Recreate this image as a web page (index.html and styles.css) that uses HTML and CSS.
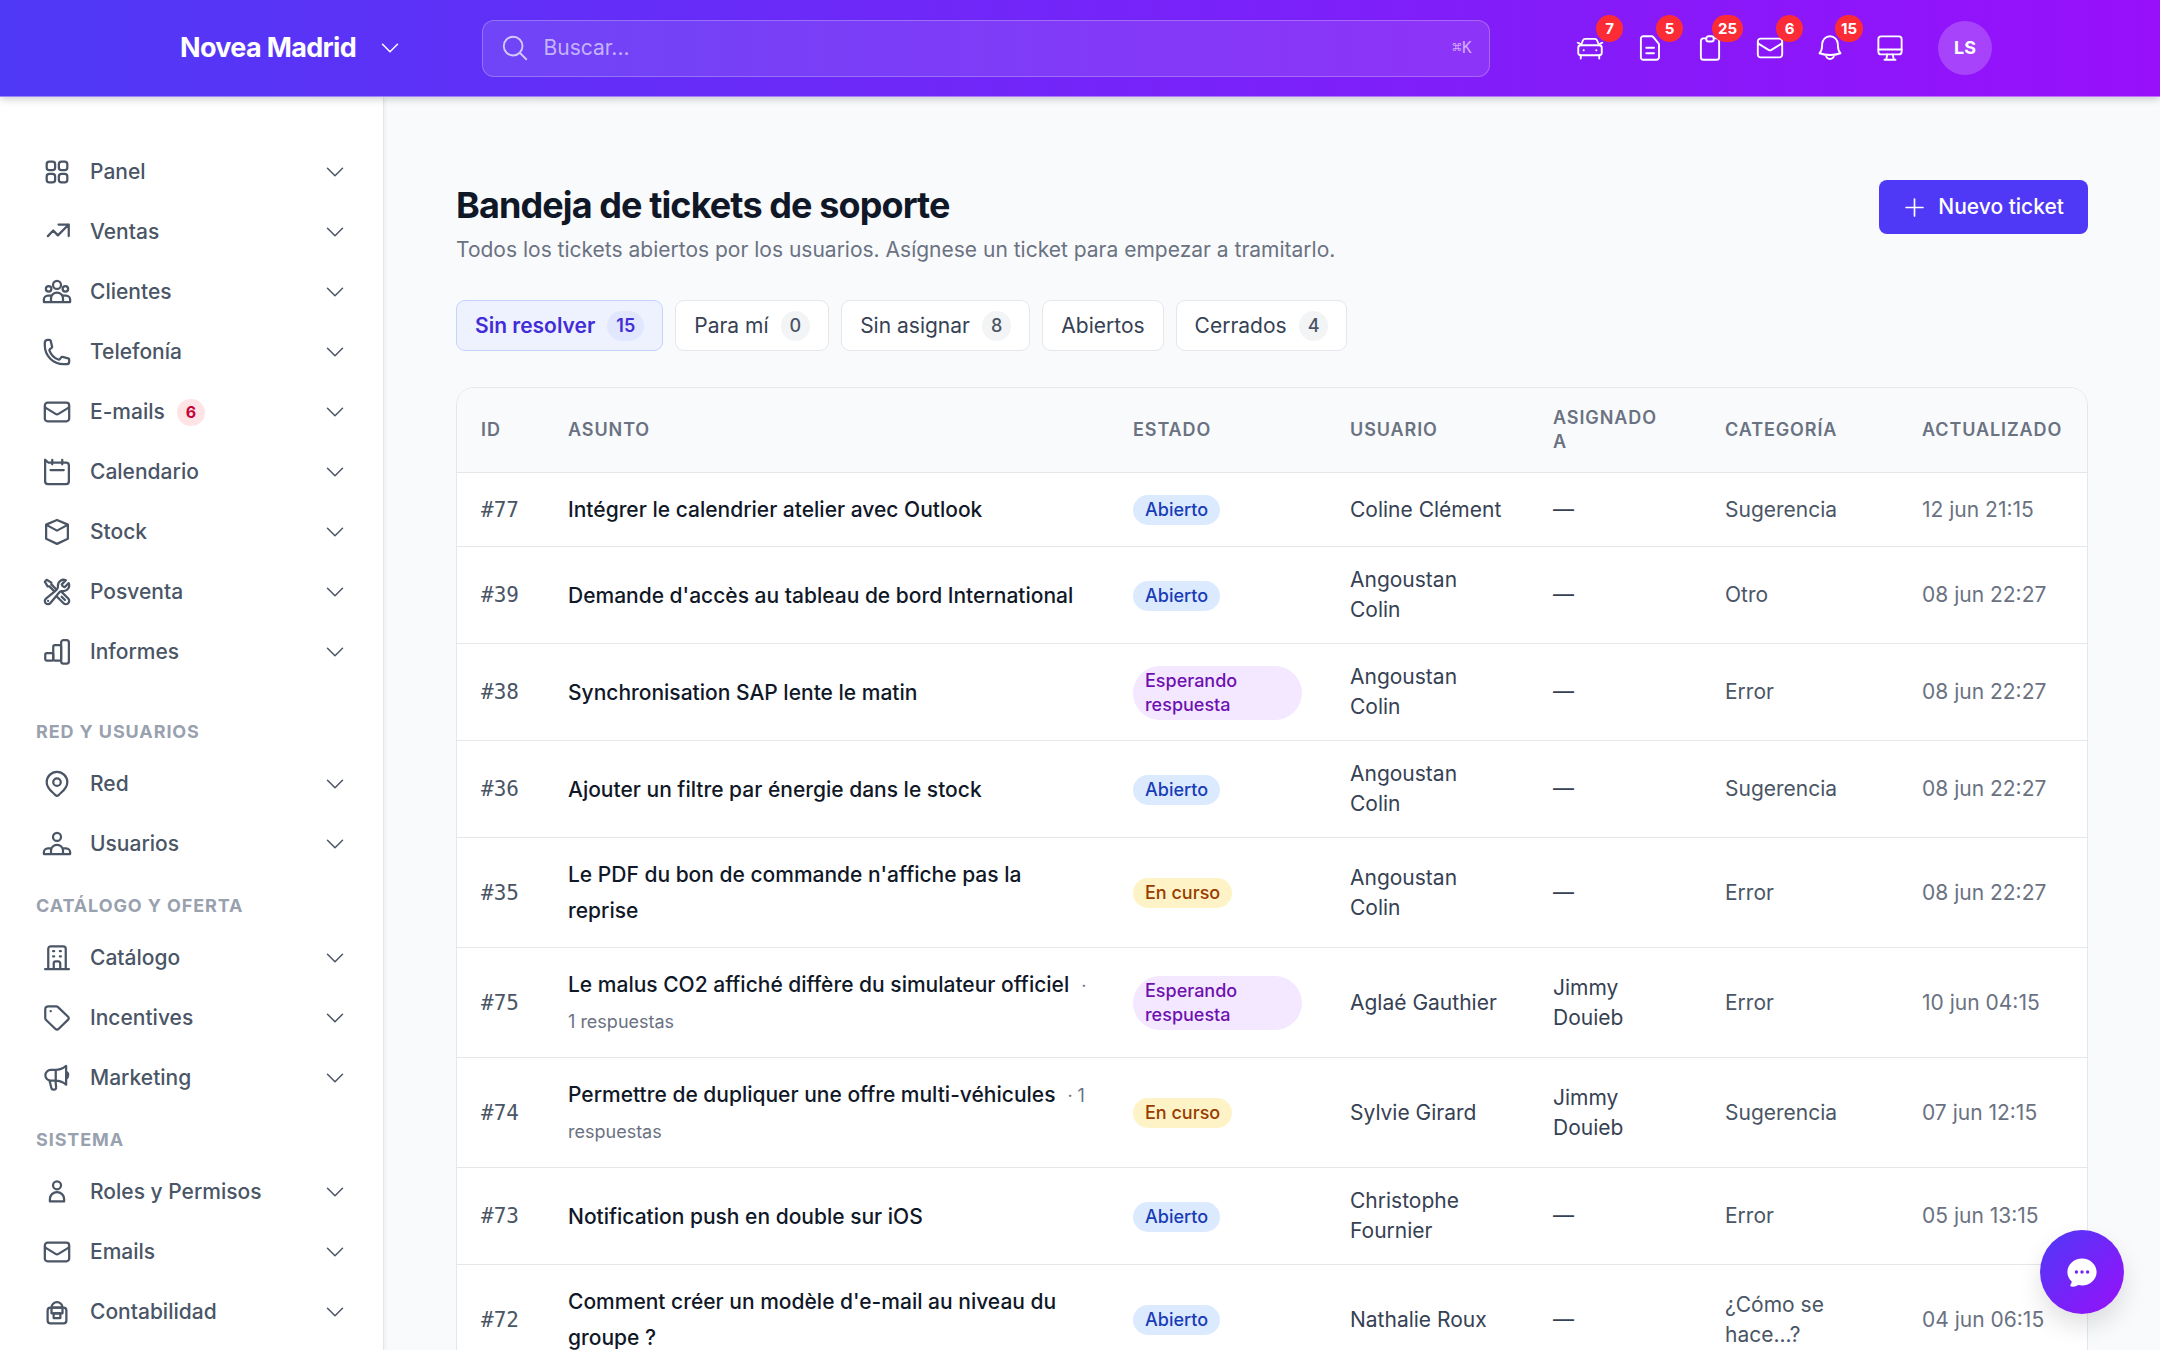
FILE: index.html
```html
<!DOCTYPE html>
<html lang="es">
<head>
    <meta charset="UTF-8">
    <meta name="viewport" content="width=device-width, initial-scale=1.0">
    <title>Bandeja de tickets de soporte</title>
    <link rel="stylesheet" href="styles.css">
</head>
<body>
    <svg class="sprite" aria-hidden="true">
        <symbol id="i-chevron" viewBox="0 0 24 24"><path d="m19.5 8.25-7.5 7.5-7.5-7.5"/></symbol>
        <symbol id="i-search" viewBox="0 0 24 24"><path d="m21 21-5.197-5.197m0 0A7.5 7.5 0 1 0 5.196 5.196a7.5 7.5 0 0 0 10.607 10.607Z"/></symbol>
        <symbol id="i-plus" viewBox="0 0 24 24"><path d="M12 4.5v15m7.5-7.5h-15"/></symbol>
        <symbol id="i-car" viewBox="0 0 24 24">
            <path d="M4.8 9.8 6.3 6A2 2 0 0 1 8.2 4.7h7.6A2 2 0 0 1 17.7 6l1.5 3.8M2.2 7.8l1.6.7M21.8 7.8l-1.6.7M4.6 17.8v2.6M19.4 17.8v2.6M6.9 13.8h.1M17 13.8h.1"/>
            <rect x="2.6" y="9.8" width="18.8" height="8" rx="2"/>
        </symbol>
        <symbol id="i-document" viewBox="0 0 24 24"><path d="M6.6 2.6h6.6a2 2 0 0 1 1.5.7l3.9 4.8a2 2 0 0 1 .6 1.4v9.8a2.1 2.1 0 0 1-2.1 2.1H6.6a1.9 1.9 0 0 1-1.9-1.9v-15a1.9 1.9 0 0 1 1.9-1.9ZM9 11.8h6.2M9 16.2h6.2"/></symbol>
        <symbol id="i-clipboard" viewBox="0 0 24 24">
            <path d="M9 4.3H6.8a2.1 2.1 0 0 0-2.1 2.1v12.9a2.1 2.1 0 0 0 2.1 2.1h10.4a2.1 2.1 0 0 0 2.1-2.1V6.4a2.1 2.1 0 0 0-2.1-2.1H15"/>
            <rect x="9" y="2.6" width="6" height="4.2" rx="1.9"/>
        </symbol>
        <symbol id="i-mail" viewBox="0 0 24 24"><path d="M21.75 6.75v10.5a2.25 2.25 0 0 1-2.25 2.25h-15a2.25 2.25 0 0 1-2.25-2.25V6.75m19.5 0A2.25 2.25 0 0 0 19.5 4.5h-15a2.25 2.25 0 0 0-2.25 2.25m19.5 0v.243a2.25 2.25 0 0 1-1.07 1.916l-7.5 4.615a2.25 2.25 0 0 1-2.36 0L3.32 8.91a2.25 2.25 0 0 1-1.07-1.916V6.75"/></symbol>
        <symbol id="i-bell" viewBox="0 0 24 24"><path d="M20.4 16.2c-1.6-1.7-2.1-3.6-2.1-6.2V8.9a6.3 6.3 0 0 0-12.6 0V10c0 2.6-.5 4.5-2.1 6.2 5.5 1.9 11.3 1.9 16.8 0ZM8.8 17.6a3.2 3.2 0 0 0 6.4 0"/></symbol>
        <symbol id="i-monitor" viewBox="0 0 24 24">
            <rect x="2.7" y="2.7" width="18.6" height="14.4" rx="2.2"/>
            <path d="M2.7 13.2h18.6M9.8 17.1l-.8 4.2M14.2 17.1l.8 4.2M7.6 21.4h8.8"/>
        </symbol>
        <symbol id="i-panel" viewBox="0 0 24 24">
            <rect x="3.75" y="3.75" width="6.75" height="6.75" rx="2.1"/>
            <rect x="13.5" y="3.75" width="6.75" height="6.75" rx="2.1"/>
            <rect x="3.75" y="13.5" width="6.75" height="6.75" rx="2.1"/>
            <rect x="13.5" y="13.5" width="6.75" height="6.75" rx="2.1"/>
        </symbol>
        <symbol id="i-trend" viewBox="0 0 24 24"><path d="M4.7 15.3 9 10.8l3.7 3.9L21.4 6M13.2 6h8.2v9.2"/></symbol>
        <symbol id="i-clients" viewBox="0 0 24 24">
            <circle cx="12" cy="6.3" r="3.2"/>
            <circle cx="5.3" cy="9.4" r="2.2"/>
            <circle cx="18.7" cy="9.4" r="2.2"/>
            <path d="M7.2 20v-2.8a4.8 4.8 0 0 1 9.6 0V20M7.2 14.8H4.7A3.2 3.2 0 0 0 1.5 18v2h21v-2a3.2 3.2 0 0 0-3.2-3.2h-2.5"/>
        </symbol>
        <symbol id="i-phone" viewBox="0 0 24 24"><path d="M2.25 6.75c0 8.284 6.716 15 15 15h2.25a2.25 2.25 0 0 0 2.25-2.25v-1.372c0-.516-.351-.966-.852-1.091l-4.423-1.106c-.44-.11-.902.055-1.173.417l-.97 1.293c-.282.376-.769.542-1.21.38a12.035 12.035 0 0 1-7.143-7.143c-.162-.441.004-.928.38-1.21l1.293-.97c.363-.271.527-.734.417-1.173L6.963 3.102a1.125 1.125 0 0 0-1.091-.852H4.5A2.25 2.25 0 0 0 2.25 4.5v2.25Z"/></symbol>
        <symbol id="i-calendar" viewBox="0 0 24 24"><path d="M2.5 2.2v17.2a2.2 2.2 0 0 0 2.2 2.2h14.6a2.2 2.2 0 0 0 2.2-2.2V6.6a2.2 2.2 0 0 0-2.2-2.2H5ZM8.2 2.2v3.6M16.2 2.2v3.6M6.8 10.4h10.6"/></symbol>
        <symbol id="i-cube" viewBox="0 0 24 24"><path d="m12 2.4 8.7 3.7v11.3L12 21.5l-8.7-4.1V6.1ZM3.5 6.3 12 10.9l8.5-4.6"/></symbol>
        <symbol id="i-tools" viewBox="0 0 24 24"><path d="M11.42 15.17 17.25 21A2.652 2.652 0 0 0 21 17.25l-5.877-5.877M11.42 15.17l2.496-3.03c.317-.384.74-.626 1.208-.766M11.42 15.17l-4.655 5.653a2.548 2.548 0 1 1-3.586-3.586l6.837-5.63m5.108-.233c.55-.164 1.163-.188 1.743-.14a4.5 4.5 0 0 0 4.486-6.336l-3.276 3.277a3.004 3.004 0 0 1-2.25-2.25l3.276-3.276a4.5 4.5 0 0 0-6.336 4.486c.091 1.076-.071 2.264-.904 2.95l-.102.085m-1.745 1.437L5.909 7.5H4.5L2.25 3.75l1.5-1.5L7.5 4.5v1.409l4.26 4.26m-1.745 1.437 1.745-1.437m6.615 8.206L15.75 15.75M4.867 19.125h.008v.008h-.008v-.008Z"/></symbol>
        <symbol id="i-bars" viewBox="0 0 24 24">
            <rect x="2.6" y="12.8" width="6.4" height="6.1" rx="1.3"/>
            <rect x="9" y="6.4" width="6.3" height="12.5" rx="1.3"/>
            <rect x="15.3" y="2.5" width="6.2" height="18.7" rx="1.9"/>
        </symbol>
        <symbol id="i-pin" viewBox="0 0 24 24">
            <path d="M20.25 10.5c0 5-4 7.3-7 10.4a1.8 1.8 0 0 1-2.5 0c-3-3.1-7-5.4-7-10.4a8.25 8.25 0 0 1 16.5 0Z"/>
            <circle cx="12" cy="10.5" r="3"/>
        </symbol>
        <symbol id="i-users" viewBox="0 0 24 24">
            <circle cx="12" cy="6.3" r="3.2"/>
            <path d="M7.2 20v-2.6a4.8 4.8 0 0 1 9.6 0V20M7.2 15.4H4.7a3.2 3.2 0 0 0-3.2 3.2V20h21v-1.4a3.2 3.2 0 0 0-3.2-3.2h-2.5"/>
        </symbol>
        <symbol id="i-building" viewBox="0 0 24 24"><path d="M2.5 20.9h19M5 20.9V4.6a2 2 0 0 1 2-2h10a2 2 0 0 1 2 2v16.3M8.9 6.5h.8M14.3 6.5h.8M8.9 10.7h.8M14.3 10.7h.8M9.4 20.9v-4.7a1.5 1.5 0 0 1 1.5-1.5h2.2a1.5 1.5 0 0 1 1.5 1.5v4.7"/></symbol>
        <symbol id="i-tag" viewBox="0 0 24 24"><path d="M5 2.6h6.2c.6 0 1.2.2 1.6.7l8.1 7.7a1.6 1.6 0 0 1 0 2.3l-7.5 7.3a2 2 0 0 1-2.8 0L3.3 13.6a2.3 2.3 0 0 1-.7-1.6V5A2.4 2.4 0 0 1 5 2.6ZM6.9 6.5h.1"/></symbol>
        <symbol id="i-megaphone" viewBox="0 0 24 24"><path d="M19.3 2.3v15c-2.6-2.2-5.2-3.2-8.8-3.2H7a4.3 4.3 0 0 1 0-8.6h3.5c3.6 0 6.2-1 8.8-3.2ZM11 5.5v8.6M19.3 6.8a3.6 3.6 0 0 1 0 6M6 14l1.5 6a1.6 1.6 0 0 0 1.6 1.3h.6a1.6 1.6 0 0 0 1.6-1.8L10.8 14"/></symbol>
        <symbol id="i-user" viewBox="0 0 24 24">
            <circle cx="12" cy="6.6" r="3.2"/>
            <path d="M6.3 19.5v-1.8a5.7 5.7 0 0 1 11.4 0v1.8Z"/>
        </symbol>
        <symbol id="i-lock" viewBox="0 0 24 24">
            <rect x="4.5" y="8.5" width="15" height="12.5" rx="2.2"/>
            <rect x="9.3" y="13" width="5.4" height="3.8"/>
            <path d="M7.6 13V8.5a4.4 4.4 0 0 1 8.8 0V13ZM7.6 8.5h8.8"/>
        </symbol>
        <symbol id="i-chat" viewBox="0 0 24 24"><path fill-rule="evenodd" d="M4.804 21.644A6.707 6.707 0 0 0 6 21.75a6.721 6.721 0 0 0 3.583-1.029c.774.182 1.584.279 2.417.279 5.322 0 9.75-3.97 9.75-9 0-5.03-4.428-9-9.75-9s-9.75 3.97-9.75 9c0 2.409 1.025 4.587 2.674 6.192.232.226.277.428.254.543a3.73 3.73 0 0 1-.814 1.686.75.75 0 0 0 .44 1.223ZM8.25 10.875a1.125 1.125 0 1 0 0 2.25 1.125 1.125 0 0 0 0-2.25ZM10.875 12a1.125 1.125 0 1 1 2.25 0 1.125 1.125 0 0 1-2.25 0Zm4.875-1.125a1.125 1.125 0 1 0 0 2.25 1.125 1.125 0 0 0 0-2.25Z"/></symbol>
    </svg>

    <header class="topbar">
        <div class="topbar-inner">
            <button class="brand" type="button">
                Novea Madrid
                <svg class="icon-sm"><use href="#i-chevron"/></svg>
            </button>
            <div class="search-wrap">
                <label class="search">
                    <svg class="icon"><use href="#i-search"/></svg>
                    <input type="search" placeholder="Buscar..." aria-label="Buscar">
                    <kbd>⌘K</kbd>
                </label>
            </div>
            <div class="actions">
                <button type="button" aria-label="Vehículos"><svg class="icon"><use href="#i-car"/></svg><span class="count">7</span></button>
                <button type="button" aria-label="Documentos"><svg class="icon"><use href="#i-document"/></svg><span class="count">5</span></button>
                <button type="button" aria-label="Tareas"><svg class="icon"><use href="#i-clipboard"/></svg><span class="count">25</span></button>
                <button type="button" aria-label="E-mails"><svg class="icon"><use href="#i-mail"/></svg><span class="count">6</span></button>
                <button type="button" aria-label="Notificaciones"><svg class="icon"><use href="#i-bell"/></svg><span class="count">15</span></button>
                <button type="button" aria-label="Pantalla"><svg class="icon"><use href="#i-monitor"/></svg></button>
            </div>
            <button class="avatar" type="button">LS</button>
        </div>
    </header>

    <div class="layout">
        <nav class="sidebar">
            <button class="nav-item" type="button"><svg class="icon"><use href="#i-panel"/></svg>Panel<svg class="icon-sm"><use href="#i-chevron"/></svg></button>
            <button class="nav-item" type="button"><svg class="icon"><use href="#i-trend"/></svg>Ventas<svg class="icon-sm"><use href="#i-chevron"/></svg></button>
            <button class="nav-item" type="button"><svg class="icon"><use href="#i-clients"/></svg>Clientes<svg class="icon-sm"><use href="#i-chevron"/></svg></button>
            <button class="nav-item" type="button"><svg class="icon"><use href="#i-phone"/></svg>Telefonía<svg class="icon-sm"><use href="#i-chevron"/></svg></button>
            <button class="nav-item" type="button"><svg class="icon"><use href="#i-mail"/></svg>E-mails<span class="nav-count">6</span><svg class="icon-sm"><use href="#i-chevron"/></svg></button>
            <button class="nav-item" type="button"><svg class="icon"><use href="#i-calendar"/></svg>Calendario<svg class="icon-sm"><use href="#i-chevron"/></svg></button>
            <button class="nav-item" type="button"><svg class="icon"><use href="#i-cube"/></svg>Stock<svg class="icon-sm"><use href="#i-chevron"/></svg></button>
            <button class="nav-item" type="button"><svg class="icon"><use href="#i-tools"/></svg>Posventa<svg class="icon-sm"><use href="#i-chevron"/></svg></button>
            <button class="nav-item" type="button"><svg class="icon"><use href="#i-bars"/></svg>Informes<svg class="icon-sm"><use href="#i-chevron"/></svg></button>

            <h2 class="nav-title nav-title-first">Red y usuarios</h2>
            <button class="nav-item" type="button"><svg class="icon"><use href="#i-pin"/></svg>Red<svg class="icon-sm"><use href="#i-chevron"/></svg></button>
            <button class="nav-item" type="button"><svg class="icon"><use href="#i-users"/></svg>Usuarios<svg class="icon-sm"><use href="#i-chevron"/></svg></button>

            <h2 class="nav-title">Catálogo y oferta</h2>
            <button class="nav-item" type="button"><svg class="icon"><use href="#i-building"/></svg>Catálogo<svg class="icon-sm"><use href="#i-chevron"/></svg></button>
            <button class="nav-item" type="button"><svg class="icon"><use href="#i-tag"/></svg>Incentives<svg class="icon-sm"><use href="#i-chevron"/></svg></button>
            <button class="nav-item" type="button"><svg class="icon"><use href="#i-megaphone"/></svg>Marketing<svg class="icon-sm"><use href="#i-chevron"/></svg></button>

            <h2 class="nav-title">Sistema</h2>
            <button class="nav-item" type="button"><svg class="icon"><use href="#i-user"/></svg>Roles y Permisos<svg class="icon-sm"><use href="#i-chevron"/></svg></button>
            <button class="nav-item" type="button"><svg class="icon"><use href="#i-mail"/></svg>Emails<svg class="icon-sm"><use href="#i-chevron"/></svg></button>
            <button class="nav-item" type="button"><svg class="icon"><use href="#i-lock"/></svg>Contabilidad<svg class="icon-sm"><use href="#i-chevron"/></svg></button>
        </nav>

        <main class="content">
            <div class="page-head">
                <div>
                    <h1>Bandeja de tickets de soporte</h1>
                    <p>Todos los tickets abiertos por los usuarios. Asígnese un ticket para empezar a tramitarlo.</p>
                </div>
                <button class="btn-primary" type="button"><svg class="icon-sm"><use href="#i-plus"/></svg>Nuevo ticket</button>
            </div>

            <div class="tabs">
                <button class="tab active" type="button">Sin resolver <span>15</span></button>
                <button class="tab" type="button">Para mí <span>0</span></button>
                <button class="tab" type="button">Sin asignar <span>8</span></button>
                <button class="tab" type="button">Abiertos</button>
                <button class="tab" type="button">Cerrados <span>4</span></button>
            </div>

            <div class="card">
                <table class="tickets">
                    <colgroup>
                        <col class="col-id">
                        <col>
                        <col class="col-status">
                        <col class="col-user">
                        <col class="col-assigned">
                        <col class="col-category">
                        <col class="col-updated">
                    </colgroup>
                    <thead>
                        <tr>
                            <th>ID</th>
                            <th>Asunto</th>
                            <th>Estado</th>
                            <th>Usuario</th>
                            <th>Asignado a</th>
                            <th>Categoría</th>
                            <th class="date">Actualizado</th>
                        </tr>
                    </thead>
                    <tbody>
                        <tr>
                            <td class="id">#77</td>
                            <td class="subject"><a href="#">Intégrer le calendrier atelier avec Outlook</a></td>
                            <td><span class="badge open">Abierto</span></td>
                            <td>Coline Clément</td>
                            <td>—</td>
                            <td class="category">Sugerencia</td>
                            <td class="date">12 jun 21:15</td>
                        </tr>
                        <tr>
                            <td class="id">#39</td>
                            <td class="subject"><a href="#">Demande d'accès au tableau de bord International</a></td>
                            <td><span class="badge open">Abierto</span></td>
                            <td>Angoustan Colin</td>
                            <td>—</td>
                            <td class="category">Otro</td>
                            <td class="date">08 jun 22:27</td>
                        </tr>
                        <tr>
                            <td class="id">#38</td>
                            <td class="subject"><a href="#">Synchronisation SAP lente le matin</a></td>
                            <td><span class="badge waiting">Esperando respuesta</span></td>
                            <td>Angoustan Colin</td>
                            <td>—</td>
                            <td class="category">Error</td>
                            <td class="date">08 jun 22:27</td>
                        </tr>
                        <tr>
                            <td class="id">#36</td>
                            <td class="subject"><a href="#">Ajouter un filtre par énergie dans le stock</a></td>
                            <td><span class="badge open">Abierto</span></td>
                            <td>Angoustan Colin</td>
                            <td>—</td>
                            <td class="category">Sugerencia</td>
                            <td class="date">08 jun 22:27</td>
                        </tr>
                        <tr>
                            <td class="id">#35</td>
                            <td class="subject"><a href="#">Le PDF du bon de commande n'affiche pas la reprise</a></td>
                            <td><span class="badge progress">En curso</span></td>
                            <td>Angoustan Colin</td>
                            <td>—</td>
                            <td class="category">Error</td>
                            <td class="date">08 jun 22:27</td>
                        </tr>
                        <tr>
                            <td class="id">#75</td>
                            <td class="subject"><a href="#">Le malus CO2 affiché diffère du simulateur officiel</a> <span class="replies">· 1 respuestas</span></td>
                            <td><span class="badge waiting">Esperando respuesta</span></td>
                            <td>Aglaé Gauthier</td>
                            <td>Jimmy Douieb</td>
                            <td class="category">Error</td>
                            <td class="date">10 jun 04:15</td>
                        </tr>
                        <tr>
                            <td class="id">#74</td>
                            <td class="subject"><a href="#">Permettre de dupliquer une offre multi-véhicules</a> <span class="replies">· 1 respuestas</span></td>
                            <td><span class="badge progress">En curso</span></td>
                            <td>Sylvie Girard</td>
                            <td>Jimmy Douieb</td>
                            <td class="category">Sugerencia</td>
                            <td class="date">07 jun 12:15</td>
                        </tr>
                        <tr>
                            <td class="id">#73</td>
                            <td class="subject"><a href="#">Notification push en double sur iOS</a></td>
                            <td><span class="badge open">Abierto</span></td>
                            <td>Christophe Fournier</td>
                            <td>—</td>
                            <td class="category">Error</td>
                            <td class="date">05 jun 13:15</td>
                        </tr>
                        <tr>
                            <td class="id">#72</td>
                            <td class="subject"><a href="#">Comment créer un modèle d'e-mail au niveau du groupe ?</a></td>
                            <td><span class="badge open">Abierto</span></td>
                            <td>Nathalie Roux</td>
                            <td>—</td>
                            <td class="category">¿Cómo se hace...?</td>
                            <td class="date">04 jun 06:15</td>
                        </tr>
                    </tbody>
                </table>
            </div>
        </main>
    </div>

    <button class="chat" type="button" aria-label="Abrir chat"><svg><use href="#i-chat"/></svg></button>
</body>
</html>
```
FILE: styles.css
```css
* {
    box-sizing: border-box;
}
body {
    margin: 0;
    height: 100vh;
    display: flex;
    flex-direction: column;
    overflow: hidden;
    font-family: Inter, "Liberation Sans", sans-serif;
    font-size: 21px;
    line-height: 30px;
    color: #364153;
    background: #f9fafc;
}
button, input {
    font: inherit;
    color: inherit;
}
button {
    border: none;
    background: none;
    padding: 0;
    cursor: pointer;
}
h1, h2, p {
    margin: 0;
}
.sprite {
    position: absolute;
    width: 0;
    height: 0;
}
.icon, .icon-sm {
    flex: none;
    fill: none;
    stroke: currentColor;
    stroke-width: 1.5;
    stroke-linecap: round;
    stroke-linejoin: round;
}
.icon {
    width: 30px;
    height: 30px;
}
.icon-sm {
    width: 24px;
    height: 24px;
}

/* top bar */
.topbar {
    flex: none;
    position: relative;
    z-index: 2;
    padding: 0 168px;
    color: white;
    background: linear-gradient(90deg, #4f39f6, #9810fa);
    border-bottom: 1px solid rgba(255, 255, 255, 0.4);
    box-shadow: 0 2px 8px rgba(0, 0, 0, 0.2);
}
.topbar-inner {
    display: flex;
    align-items: center;
    height: 96px;
}
.brand {
    display: flex;
    align-items: center;
    gap: 22px;
    padding-left: 12px;
    font-size: 27px;
    font-weight: 700;
    letter-spacing: -0.025em;
}
.search-wrap {
    flex: 1;
    display: flex;
    justify-content: center;
    padding: 0 24px;
}
.search {
    flex: 1;
    max-width: 1008px;
    height: 57px;
    display: flex;
    align-items: center;
    gap: 14px;
    padding: 0 17px;
    color: rgba(255, 255, 255, 0.7);
    background: rgba(255, 255, 255, 0.1);
    border: 1px solid rgba(255, 255, 255, 0.25);
    border-radius: 12px;
}
.search input {
    flex: 1;
    min-width: 0;
    padding: 0;
    border: none;
    outline: none;
    background: none;
}
.search input::placeholder {
    color: rgba(255, 255, 255, 0.6);
}
.search kbd {
    font-family: "DejaVu Sans Mono", monospace;
    font-size: 16px;
    color: rgba(255, 255, 255, 0.6);
}
.actions {
    display: flex;
    gap: 18px;
}
.actions button {
    position: relative;
    width: 42px;
    height: 42px;
    display: flex;
    align-items: center;
    justify-content: center;
}
.count {
    position: absolute;
    top: -12px;
    right: -12px;
    min-width: 27px;
    height: 27px;
    padding: 0 6px;
    border-radius: 14px;
    background: #fb2c36;
    font-size: 15px;
    font-weight: 700;
    line-height: 27px;
}
.avatar {
    width: 54px;
    height: 54px;
    margin-left: 27px;
    border-radius: 50%;
    background: rgba(255, 255, 255, 0.2);
    font-size: 18px;
    font-weight: 700;
}

/* sidebar */
.layout {
    flex: 1;
    min-height: 0;
    display: flex;
}
.sidebar {
    flex: none;
    width: 384px;
    padding: 45px 36px 0;
    overflow: hidden;
    background: white;
    border-right: 1px solid #e5e7eb;
    box-shadow: 1px 0 4px rgba(0, 0, 0, 0.06);
}
.nav-item {
    width: 100%;
    height: 60px;
    display: flex;
    align-items: center;
    gap: 18px;
    padding: 0 0 0 6px;
    font-weight: 500;
    color: #4a5565;
}
.nav-item .icon {
    stroke-width: 1.8;
}
.nav-item .icon-sm {
    margin-left: auto;
}
.nav-count {
    min-width: 28px;
    height: 27px;
    margin-left: -6px;
    border-radius: 14px;
    background: #ffe4e6;
    color: #c70036;
    font-size: 16px;
    font-weight: 700;
    line-height: 27px;
}
.nav-title {
    padding: 20px 0 10px;
    font-size: 18px;
    line-height: 24px;
    font-weight: 700;
    letter-spacing: 0.05em;
    text-transform: uppercase;
    color: #99a1af;
}
.nav-title-first {
    padding-top: 38px;
}

/* page */
.content {
    flex: 1;
    min-width: 0;
    padding: 83px 72px 0;
    overflow: hidden;
}
.page-head {
    display: flex;
    align-items: flex-start;
    justify-content: space-between;
    margin-bottom: 35px;
}
h1 {
    margin-bottom: 5px;
    font-size: 36px;
    line-height: 50px;
    font-weight: 700;
    letter-spacing: -0.025em;
    color: #101828;
}
.page-head p {
    color: #6a7282;
}
.btn-primary {
    height: 54px;
    display: flex;
    align-items: center;
    gap: 10px;
    padding: 0 24px 0 22px;
    border-radius: 8px;
    background: #4f39f6;
    color: white;
    font-weight: 500;
}
.btn-primary .icon-sm {
    width: 27px;
    height: 27px;
}
.tabs {
    display: flex;
    gap: 12px;
    margin-bottom: 36px;
}
.tab {
    height: 51px;
    display: flex;
    align-items: center;
    gap: 12px;
    padding: 0 18px;
    background: white;
    border: 1px solid #e5e7eb;
    border-radius: 9px;
}
.tab span {
    padding: 0 9px;
    border-radius: 15px;
    background: #f3f4f6;
    font-size: 18px;
    font-weight: 500;
    color: #4a5565;
}
.tab.active {
    background: #eef2ff;
    border-color: #c6d2ff;
    color: #432dd7;
    font-weight: 600;
}
.tab.active span {
    background: #e0e7ff;
    color: #432dd7;
    font-weight: 600;
}

/* tickets */
.card {
    overflow: hidden;
    background: white;
    border: 1px solid #e5e7eb;
    border-radius: 18px;
}
.tickets {
    width: 100%;
    table-layout: fixed;
    border-collapse: collapse;
}
.col-id {
    width: 87px;
}
.col-status {
    width: 217px;
}
.col-user {
    width: 203px;
}
.col-assigned {
    width: 172px;
}
.col-category {
    width: 197px;
}
.col-updated {
    width: 189px;
}
th, td {
    padding: 18px 24px;
    text-align: left;
    border-bottom: 1px solid #e5e7eb;
}
th {
    padding-right: 32px;
    font-size: 18px;
    line-height: 24px;
    font-weight: 600;
    letter-spacing: 0.05em;
    text-transform: uppercase;
    color: #6a7282;
    background: #f9fafc;
}
.id {
    padding-right: 0;
    font-family: "DejaVu Sans Mono", monospace;
    color: #4a5565;
}
.subject {
    padding-top: 19px;
    padding-right: 16px;
    line-height: 36px;
}
.subject a {
    color: #101828;
    font-weight: 500;
    text-decoration: none;
}
.replies {
    margin-left: 6px;
    font-size: 18px;
    line-height: 24px;
    color: #6a7282;
}
.category {
    color: #4a5565;
}
.date {
    padding-right: 18px;
    color: #6a7282;
}
.badge {
    display: inline-flex;
    padding: 3px 12px;
    border-radius: 27px;
    font-size: 18px;
    line-height: 24px;
    font-weight: 500;
}
.open {
    background: #dbeafe;
    color: #193cb8;
}
.waiting {
    background: #f3e8ff;
    color: #6e11b0;
}
.progress {
    background: #fef3c6;
    color: #973c00;
}

/* floating chat */
.chat {
    position: fixed;
    right: 36px;
    bottom: 36px;
    z-index: 3;
    width: 84px;
    height: 84px;
    display: flex;
    align-items: center;
    justify-content: center;
    border-radius: 50%;
    background: linear-gradient(135deg, #4f39f6, #9810fa);
    box-shadow: 0 12px 24px rgba(0, 0, 0, 0.12);
}
.chat svg {
    width: 36px;
    height: 36px;
    fill: white;
}
```
